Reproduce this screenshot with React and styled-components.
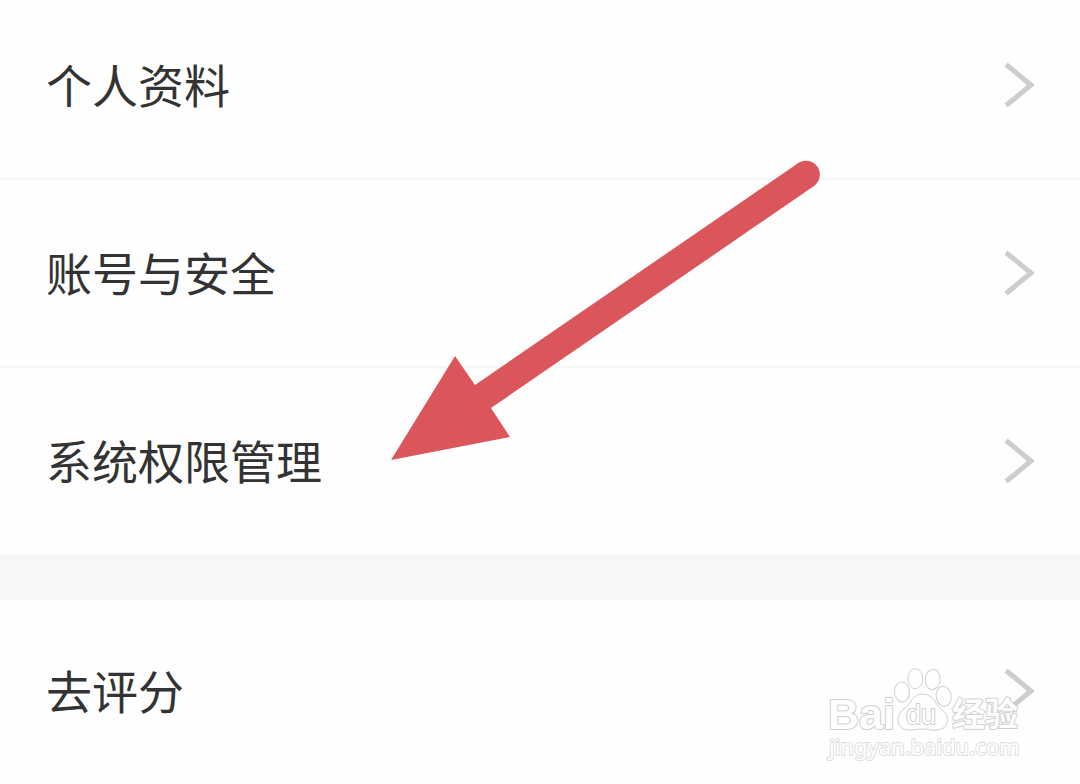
import React from "react";
import styled, { createGlobalStyle } from "styled-components";

const GlobalStyle = createGlobalStyle`
body {
  margin: 0;
  background: #fefefe;
  font-family: "Noto Sans CJK SC", sans-serif;
}
`;

const Page = styled.main`
position: relative;
overflow: hidden;
`;

const Group = styled.ul`
list-style: none;
margin: 0;
padding: 0;
`;

const Row = styled.li`
border-bottom: 2px solid #f7f7f7;
&:last-child {
  border-bottom: none;
}
`;

const RowLink = styled.a`
display: flex;
align-items: center;
justify-content: space-between;
padding: ${props => props.$top || 60}px 46px ${props => props.$bottom || 60}px;
color: #333;
font-size: 46px;
line-height: 62px;
text-decoration: none;
`;

const Label = styled.span`
padding-bottom: 4px;
`;

const Gap = styled.div`
height: 46px;
background: #f7f7f7;
`;

const ChevronIcon = styled.svg`
width: 30px;
height: 46px;
flex: none;
`;

const ArrowMark = styled.svg`
position: absolute;
left: 390px;
top: 160px;
width: 430px;
height: 301px;
pointer-events: none;
`;

const Watermark = styled.svg`
position: absolute;
right: 50px;
top: 664px;
width: 210px;
height: 100px;
pointer-events: none;
fill: #fefefe;
stroke: #cfcfcf;
stroke-width: 1;
`;

const MarkText = styled.text`
font-family: ${props => props.$font}, sans-serif;
font-size: ${props => props.$size}px;
font-weight: ${props => (props.$bold ? "bold" : "normal")};
stroke: ${props => props.$line || "#cfcfcf"};
stroke-width: 2;
stroke-linejoin: round;
paint-order: stroke;
`;

const Chevron = () => (
  <ChevronIcon viewBox="0 0 30 46" aria-hidden="true">
    <path d="M2 2.500L27 23L2 43.500" fill="none" stroke="#cdcdcd" strokeWidth="5" />
  </ChevronIcon>
);

const Item = ({ label, top, bottom }) => (
  <Row>
    <RowLink href="#" $top={top} $bottom={bottom}>
      <Label>{label}</Label>
      <Chevron />
    </RowLink>
  </Row>
);

const App = () => {
return (
  <>
    <GlobalStyle />
    <Page>
      <Group>
        <Item label="个人资料" top={52} />
        <Item label="账号与安全" />
        <Item label="系统权限管理" />
      </Group>
      <Gap />
      <Group>
        <Item label="去评分" top={58} bottom={58} />
      </Group>
      <ArrowMark viewBox="0 0 430 301" aria-hidden="true">
        <path
          d="M1 300L65 196L85 225L408 3.200A14 14 0 0 1 424 26L101 248L120 277Z"
          fill="#db565b"
        />
        <circle cx="416" cy="14.500" r="13.800" fill="#db565b" />
      </ArrowMark>
      <Watermark viewBox="0 0 210 100">
        <MarkText x="8" y="65" $font="Liberation Sans" $size={43} $bold>Bai</MarkText>
        <ellipse cx="82" cy="28" rx="7.500" ry="10" transform="rotate(-4 82 28)" />
        <ellipse cx="95.300" cy="14.700" rx="7.500" ry="10" />
        <ellipse cx="112.700" cy="15.500" rx="7.500" ry="10" transform="rotate(6 112.700 15.500)" />
        <ellipse cx="123.700" cy="32.300" rx="7.500" ry="10" transform="rotate(-10 123.700 32.300)" />
        <path d="M103 30C92 30 91 40 84 45C75 51 76 66 89 66C95 66 98 65 103 65C108 65 112 67 117 66C130 65 130 51 122 46C115 40 113 30 103 30Z" />
        <MarkText x="86" y="60" $font="Liberation Sans" $size={27}>du</MarkText>
        <MarkText x="132" y="62" $font="Noto Sans CJK SC" $size={33} $bold>经验</MarkText>
        <MarkText x="9" y="91" $font="Noto Sans" $size={22} $line="#dedede">jingyan.baidu.com</MarkText>
      </Watermark>
    </Page>
  </>
);
};
export default App;
